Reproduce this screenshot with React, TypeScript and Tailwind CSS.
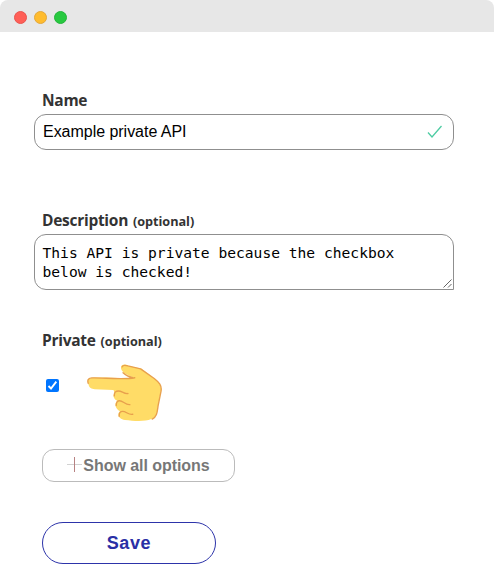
import React from 'react';

function FieldLabel({ text, optional = false }: { text: string; optional?: boolean }) {
  return (
    <div className="flex h-6 items-baseline gap-[5px] pl-2 font-['Open_Sans','Noto_Sans',sans-serif] text-[15.5px] leading-[25px] font-bold tracking-[-0.28px] text-[#333]">
      <span>{text}</span>
      {optional && <span className="text-[12.7px] tracking-[-0.05px]">(optional)</span>}
    </div>
  );
}

function PointingHand() {
  return (
    <svg className="h-[58px] w-[76px]" viewBox="0 0 78 60" preserveAspectRatio="none" fill="none">
      <path
        d="M4 14.5 C1 15 .5 18 1.4 21 C2.5 25 4.5 26 8 26 L27 27 C28 28 28 29 28 30 C26 33 28 37 31 38 C27 42 30 47 34 49 C30 52 33 57 39 58 C48 59 59 60 66 57 C72 55 72 49 73 43 L76 27 C77 23 73 18 69 15 L56 5 L43 2 C38 -1 34 1 35 5 C36 9 42 12 48 14 C38 16 15 13 4 14.5Z"
        fill="#ffdc67"
      />
      <path
        d="M1.2 20 C0 16 2 14.6 5 14.4 C16 14 37 16.5 49 14.2 M36 3 C37 .5 39 1 42 2 L55 5 L69 15 C74 19 77 22 76 28 L73 43 C72 50 72 54 67 57 M47 14.2 C42 13.2 39 11 37 9 M42 30.5 C37 31.5 34 25 29 29 C28 30 28 31 28 33 M44 42 C39 43 35 35 31 39 C30 40 30 42 30 43 M47 52 C42 53.5 38 46 34 50 C33 51 33 53 33 54"
        stroke="#e8a04d"
        strokeWidth="1.4"
        strokeLinecap="round"
        strokeLinejoin="round"
      />
    </svg>
  );
}

export default function App() {
  return (
    <div className="h-[584px] w-[494px] overflow-hidden rounded-lg bg-white">
      <header className="flex h-8 items-center gap-[7px] bg-[#e7e7e7] pt-[2px] pl-[13.5px]">
        <span className="size-[13px] rounded-full border border-[#e9534e] bg-[#ff5f57]" />
        <span className="size-[13px] rounded-full border border-[#e3a73a] bg-[#ffbc2e]" />
        <span className="size-[13px] rounded-full border border-[#24b43b] bg-[#28c940]" />
      </header>
      <main className="flex flex-col pt-14 pl-[34px]">
        <section className="flex flex-col gap-[2px]">
          <FieldLabel text="Name" />
          <div className="flex h-9 w-[420px] items-center justify-between rounded-[12px] border border-[#8f8f8f] pr-[10.5px] pl-2">
            <span className="font-['Liberation_Sans',sans-serif] text-base leading-5 tracking-[-0.03px] text-black">Example private API</span>
            <svg className="h-[14px] w-4" viewBox="0 0 16 14" fill="none">
              <path d="M1 7.5 L5 12 L14.5 1" stroke="#4ecca3" strokeWidth="1.3" />
            </svg>
          </div>
        </section>
        <section className="mt-[58px] flex flex-col gap-[2px]">
          <FieldLabel text="Description" optional />
          <div className="flex h-14 w-[420px] items-start justify-between rounded-[12px] rounded-br-none border border-[#8f8f8f] pt-[8px] pl-[7.5px]">
            <p className="font-['DejaVu_Sans_Mono',monospace] text-[14.62px] leading-[19px] whitespace-pre text-black">
              {'This API is private because the checkbox\nbelow is checked!'}
            </p>
            <svg className="mr-[1px] mb-[1px] size-[9px] self-end" viewBox="0 0 9 9" stroke="#555" fill="none">
              <path d="M.5 8.5 L8.5 .5 M5 8.5 L8.5 5" strokeWidth=".9" />
            </svg>
          </div>
        </section>
        <section className="mt-[38px]">
          <FieldLabel text="Private" optional />
          <div className="mt-[10px] flex h-[60px] items-start">
            <span className="mt-[17px] ml-3 flex size-[13px] items-center justify-center rounded-[2px] bg-[#0075ff]">
              <svg className="size-[11px]" viewBox="0 0 11 11" fill="none">
                <path d="M1.5 6 L4 8.5 L9.3 1.7" stroke="white" strokeWidth="1.9" />
              </svg>
            </span>
            <div className="mt-[2px] ml-[28px]">
              <PointingHand />
            </div>
          </div>
        </section>
        <button className="mt-[27px] ml-2 flex h-[33px] w-[193px] items-center justify-center gap-[1px] rounded-[12px] border border-[#bbb] font-['Liberation_Sans',sans-serif] text-base font-bold tracking-[-0.05px] text-[#777]">
          <svg className="mb-[2px] size-[15px]" viewBox="0 0 15 15" fill="none">
            <path d="M0 7.5H15" stroke="#d2d2d2" />
            <path d="M7.5 0V15" stroke="#b78282" />
          </svg>
          <span>Show all options</span>
        </button>
        <button className="mt-10 ml-2 h-[42px] w-[174px] rounded-full border border-[#2d34aa] font-['Liberation_Sans',sans-serif] text-[18px] font-bold tracking-[0.6px] text-[#2a2fa5]">
          Save
        </button>
      </main>
    </div>
  );
}
